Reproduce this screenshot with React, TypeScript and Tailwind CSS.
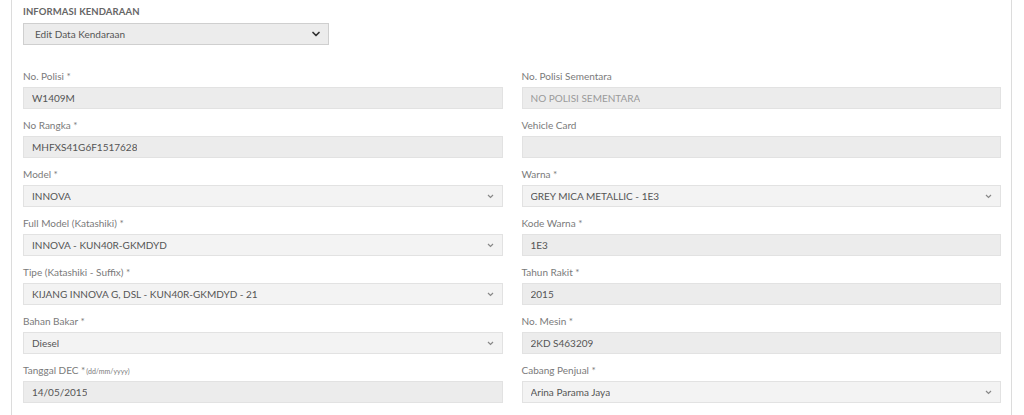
import { ChevronDown } from "lucide-react";

type Field = {
  label: string;
  hint?: string;
  value: string;
  select?: boolean;
  placeholder?: boolean;
};

const left: Field[] = [
  { label: "No. Polisi *", value: "W1409M" },
  { label: "No Rangka *", value: "MHFXS41G6F1517628" },
  { label: "Model *", value: "INNOVA", select: true },
  { label: "Full Model (Katashiki) *", value: "INNOVA - KUN40R-GKMDYD", select: true },
  { label: "Tipe (Katashiki - Suffix) *", value: "KIJANG INNOVA G, DSL - KUN40R-GKMDYD - 21", select: true },
  { label: "Bahan Bakar *", value: "Diesel", select: true },
  { label: "Tanggal DEC *", hint: "(dd/mm/yyyy)", value: "14/05/2015" },
];

const right: Field[] = [
  { label: "No. Polisi Sementara", value: "NO POLISI SEMENTARA", placeholder: true },
  { label: "Vehicle Card", value: "" },
  { label: "Warna *", value: "GREY MICA METALLIC - 1E3", select: true },
  { label: "Kode Warna *", value: "1E3" },
  { label: "Tahun Rakit *", value: "2015" },
  { label: "No. Mesin *", value: "2KD S463209" },
  { label: "Cabang Penjual *", value: "Arina Parama Jaya", select: true },
];

function SmallChevron() {
  return (
    <svg width="7" height="5" viewBox="0 0 7 5" className="shrink-0">
      <path d="M1 1l2.5 2.5L6 1" fill="none" stroke="#888" strokeWidth="1.2" />
    </svg>
  );
}

function FormField({ f }: { f: Field }) {
  return (
    <div className="mb-[10px]">
      <div className="h-[12px] leading-[12px] text-[10px] text-[#7a7a7a] mb-[5px] whitespace-nowrap">
        {f.label}
        {f.hint && <span className="text-[7px] ml-[1px]">{f.hint}</span>}
      </div>
      <div
        className={`h-[22px] flex items-center justify-between pl-[8px] pr-[8px] border border-[#e2e2e2] text-[10px] ${
          f.select ? "bg-[#f3f3f3]" : "bg-[#ececec]"
        } ${f.placeholder ? "text-[#9a9a9a]" : "text-[#555]"}`}
      >
        <span className="truncate">{f.value}</span>
        {f.select && <SmallChevron />}
      </div>
    </div>
  );
}

export default function App() {
  return (
    <div className="w-[1024px] h-[415px] bg-white overflow-hidden font-['Lato','Liberation_Sans',sans-serif]">
      <div className="ml-[11px] w-[1001px] h-full border-l border-r border-[#dcdcdc] pl-[11px] pr-[10px] pt-[6px]">
        <div className="h-[12px] leading-[12px] text-[9.5px] font-bold text-[#666] tracking-[0.1px]">
          INFORMASI KENDARAAN
        </div>
        <div className="mt-[5px] w-[306px] h-[22px] flex items-center justify-between pl-[11px] pr-[6px] bg-[#ececec] border border-[#cfcfcf] text-[10px] text-[#555]">
          <span>Edit Data Kendaraan</span>
          <ChevronDown size={12} strokeWidth={3.5} color="#333" />
        </div>
        <div className="mt-[25px] grid grid-cols-2 gap-x-[19px]">
          <div>
            {left.map((f) => (
              <FormField key={f.label} f={f} />
            ))}
          </div>
          <div>
            {right.map((f) => (
              <FormField key={f.label} f={f} />
            ))}
          </div>
        </div>
      </div>
    </div>
  );
}
